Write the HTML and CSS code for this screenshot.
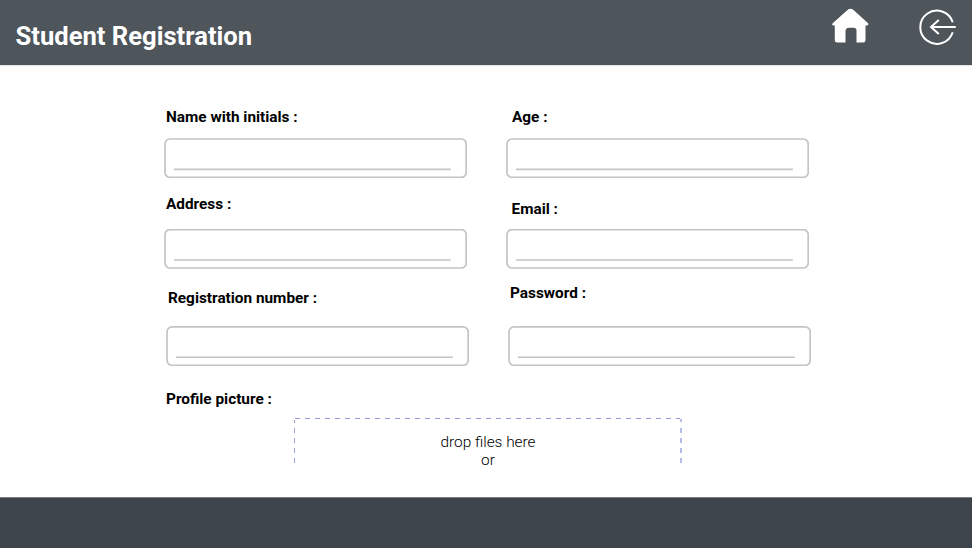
FILE: index.html
```html
<!DOCTYPE html>
<html lang="en">
<head>
<meta charset="utf-8">
<title>Student Registration</title>
<link rel="stylesheet" href="styles.css">
</head>
<body>
<header class="topbar">
  <h1 class="title">Student Registration</h1>
  <nav class="actions">
    <svg class="icon-home" width="38" height="36" viewBox="0 0 38 36" aria-label="Home">
      <path fill="#fff" d="M15.5 2Q18.5 -.3 21.5 2L36.1 15.2Q37.1 17.4 34.5 17.6H33.5V32.2Q33.5 34.5 31.2 34.5H24.5V22.5Q24.5 19.8 21.5 19.8H17Q13.5 19.8 13.5 23.3V34.5H5.3Q2.8 34.5 2.8 32V17.6H1.5Q-.7 17 .7 15.2Z"/>
    </svg>
    <svg class="icon-back" width="40" height="38" viewBox="0 0 40 38" aria-label="Log out" fill="none" stroke="#fff" stroke-width="2">
      <path d="M34.7 14.2A16.6 16.6 0 1 0 34.7 24.2M37.8 19H13M20.8 12L13 19L20.8 26"/>
    </svg>
  </nav>
</header>
<main class="page">
  <form class="form">
    <div class="column">
      <label class="label">Name with initials :</label>
      <svg class="field" viewBox="0 0 303 40"><rect class="frame" x="1" y="1" width="301.2" height="38.4" rx="5"/><path class="line" d="M10 31.4H286.8"/></svg>
      <label class="label address">Address :</label>
      <svg class="field address-field" viewBox="0 0 303 40"><rect class="frame" x="1" y=".6" width="301.2" height="38.4" rx="5"/><path class="line" d="M10 31H286.8"/></svg>
      <label class="label regno">Registration number :</label>
      <svg class="field regno-field" viewBox="0 0 303 40"><rect class="frame" x="1" y=".9" width="301.2" height="38.4" rx="5"/><path class="line" d="M10 31.3H286.8"/></svg>
      <label class="label picture">Profile picture :</label>
    </div>
    <div class="column">
      <label class="label age">Age :</label>
      <svg class="field" viewBox="0 0 303 40"><rect class="frame" x="1" y="1" width="301.2" height="38.4" rx="5"/><path class="line" d="M10 31.4H286.8"/></svg>
      <label class="label email">Email :</label>
      <svg class="field email-field" viewBox="0 0 303 40"><rect class="frame" x="1" y=".6" width="301.2" height="38.4" rx="5"/><path class="line" d="M10 31H286.8"/></svg>
      <label class="label password">Password :</label>
      <svg class="field password-field" viewBox="0 0 303 40"><rect class="frame" x="1" y=".9" width="301.2" height="38.4" rx="5"/><path class="line" d="M10 31.3H286.8"/></svg>
    </div>
  </form>
  <div class="dropzone">
    <p class="drop-text">drop files here<br>or</p>
  </div>
</main>
<footer class="footer"></footer>
</body>
</html>
```
FILE: styles.css
```css
* { box-sizing: border-box; }
body {
  margin: 0;
  height: 548px;
  display: flex;
  flex-direction: column;
  background: #fff;
  color: #000;
  font-family: Roboto, sans-serif;
  overflow: hidden;
}
.topbar {
  height: 65px;
  flex: none;
  display: flex;
  justify-content: space-between;
  background: #4e555b;
  box-shadow: 0 1px 0 #e4e5e6;
  padding: 0 14px 0 15.5px;
}
.title {
  margin: 20px 0 0;
  color: #fff;
  font-size: 25.6px;
  line-height: 32px;
  font-weight: 700;
}
.actions { display: flex; gap: 48px; padding-top: 8px; }
.page { flex: 1; padding-top: 42px; }
.form { display: grid; grid-template-columns: 303px 303px; gap: 39px; margin-left: 164px; height: 311px; }
.column { display: flex; flex-direction: column; align-items: flex-start; }
.label { font-size: 15.35px; line-height: 20px; height: 20px; font-weight: 700; margin-left: 2px; white-space: nowrap; }
.field { display: block; width: 303px; height: 40px; flex: none; margin-top: 11px; fill: none; }
.frame { stroke: #c4c4c4; stroke-width: 1.7; }
.line { stroke: #c4c4c4; stroke-width: 1.6; }
.address { margin-top: 16px; }
.address-field { margin-top: 15px; }
.regno { margin-top: 19px; margin-left: 4px; }
.regno-field { margin-top: 18px; margin-left: 2px; }
.picture { margin-top: 23px; }
.age { margin-left: 6px; }
.email { margin-top: 21px; margin-left: 5.5px; }
.email-field { margin-top: 10px; }
.password { margin-top: 14px; margin-left: 4px; }
.password-field { margin-top: 23px; margin-left: 2px; }
.dropzone {
  width: 388px;
  height: 45px;
  margin-left: 294px;
  padding-top: 15px;
  background:
    repeating-linear-gradient(90deg, #8e9bd8 0 5px, transparent 5px 10.03px) 1px 0 / 385px 1px no-repeat,
    repeating-linear-gradient(#9ba5dc 0 5px, transparent 5px 10px) 0 10px / 1px 35px no-repeat,
    repeating-linear-gradient(#b4bce6 0 5px, transparent 5px 10px) 386px 10px / 2px 35px no-repeat,
    linear-gradient(#9ba5dc, #9ba5dc) 0 2px / 1px 3px no-repeat,
    linear-gradient(#b4bce6, #b4bce6) 386px 1px / 2px 3px no-repeat;
}
.drop-text { margin: 0; text-align: center; font-size: 15.4px; line-height: 18px; font-weight: 300; }
.footer { height: 51px; flex: none; background: #3d444b; border-top: 1px solid #777c80; }
```
